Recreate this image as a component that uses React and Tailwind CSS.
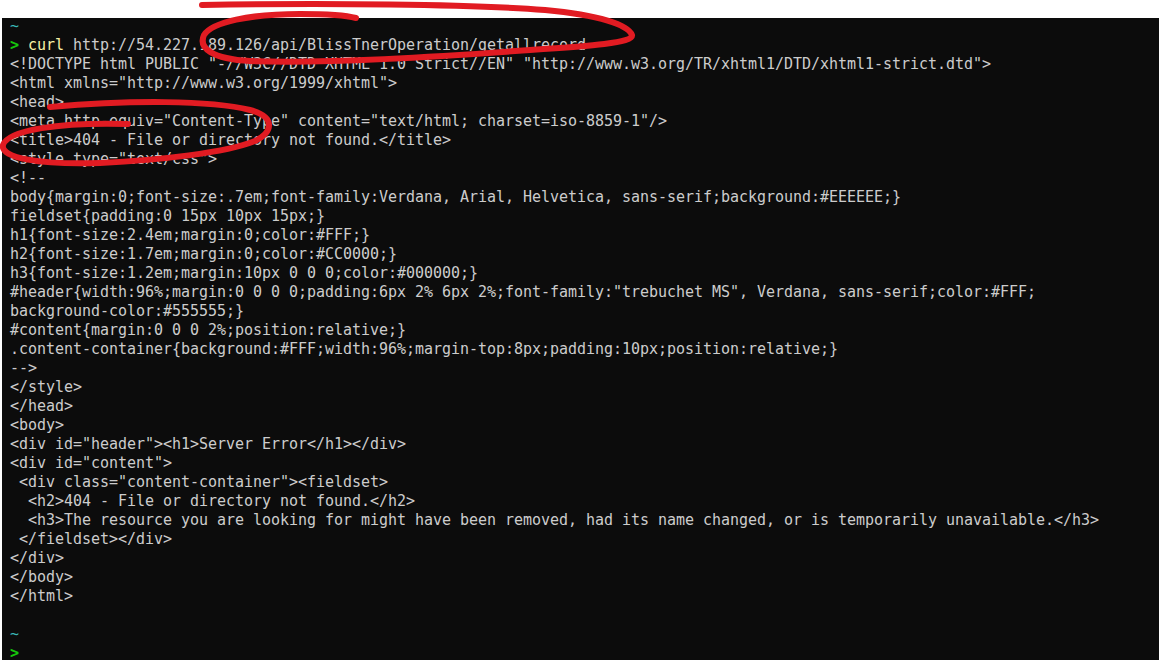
import React from 'react';

const lines = [
  '<!DOCTYPE html PUBLIC "-//W3C//DTD XHTML 1.0 Strict//EN" "http://www.w3.org/TR/xhtml1/DTD/xhtml1-strict.dtd">',
  '<html xmlns="http://www.w3.org/1999/xhtml">',
  '<head>',
  '<meta http-equiv="Content-Type" content="text/html; charset=iso-8859-1"/>',
  '<title>404 - File or directory not found.</title>',
  '<style type="text/css">',
  '<!--',
  'body{margin:0;font-size:.7em;font-family:Verdana, Arial, Helvetica, sans-serif;background:#EEEEEE;}',
  'fieldset{padding:0 15px 10px 15px;}',
  'h1{font-size:2.4em;margin:0;color:#FFF;}',
  'h2{font-size:1.7em;margin:0;color:#CC0000;}',
  'h3{font-size:1.2em;margin:10px 0 0 0;color:#000000;}',
  '#header{width:96%;margin:0 0 0 0;padding:6px 2% 6px 2%;font-family:"trebuchet MS", Verdana, sans-serif;color:#FFF;',
  'background-color:#555555;}',
  '#content{margin:0 0 0 2%;position:relative;}',
  '.content-container{background:#FFF;width:96%;margin-top:8px;padding:10px;position:relative;}',
  '-->',
  '</style>',
  '</head>',
  '<body>',
  '<div id="header"><h1>Server Error</h1></div>',
  '<div id="content">',
  ' <div class="content-container"><fieldset>',
  '  <h2>404 - File or directory not found.</h2>',
  '  <h3>The resource you are looking for might have been removed, had its name changed, or is temporarily unavailable.</h3>',
  ' </fieldset></div>',
  '</div>',
  '</body>',
  '</html>',
  '',
];

const Prompt = () => <span className="text-[#16c60c] font-bold">&gt;</span>;

export default function App() {
  return (
    <div className="relative w-[1159px] h-[660px] overflow-hidden bg-white">
      <div className="mt-[18px] ml-[2px] h-[642px] bg-[#0c0c0c] overflow-hidden">
        <div className="-mt-[1px] px-[8px] whitespace-pre text-[15px] leading-[19px] tracking-[-0.03px] text-[#cccccc] font-['DejaVu_Sans_Mono',monospace]">
          <div className="text-[#3ab8b8]">~</div>
          <div>
            <Prompt /> <span className="text-[#f9f1a5]">curl</span> http://54.227.189.126/api/BlissTnerOperation/getallrecord
          </div>
          {lines.map((l, i) => (
            <div key={i} className="h-[19px]">{l}</div>
          ))}
          <div className="text-[#3ab8b8]">~</div>
          <div><Prompt /></div>
        </div>
      </div>

      {/* hand-drawn red marks */}
      <svg className="absolute inset-0 pointer-events-none" width="1159" height="660" viewBox="0 0 1159 660" fill="none">
        <path
          d="M 202 5 C 320 3, 470 4, 545 10 C 600 15, 628 25, 632 35 C 634 43, 590 46, 530 50 C 450 56, 330 64, 250 61 C 212 59, 198 48, 204 35 C 212 22, 250 14, 300 14 C 325 14, 345 15, 356 18"
          stroke="#e11b22"
          strokeWidth="6"
          strokeLinecap="round"
          strokeLinejoin="round"
        />
        <path
          d="M 50 107 C 130 100, 210 100, 250 110 C 276 117, 273 132, 255 141 C 225 153, 160 160, 100 163 C 40 165, 0 158, 3 145 C 8 130, 60 122, 128 124"
          stroke="#e11b22"
          strokeWidth="6"
          strokeLinecap="round"
          strokeLinejoin="round"
        />
      </svg>
    </div>
  );
}
